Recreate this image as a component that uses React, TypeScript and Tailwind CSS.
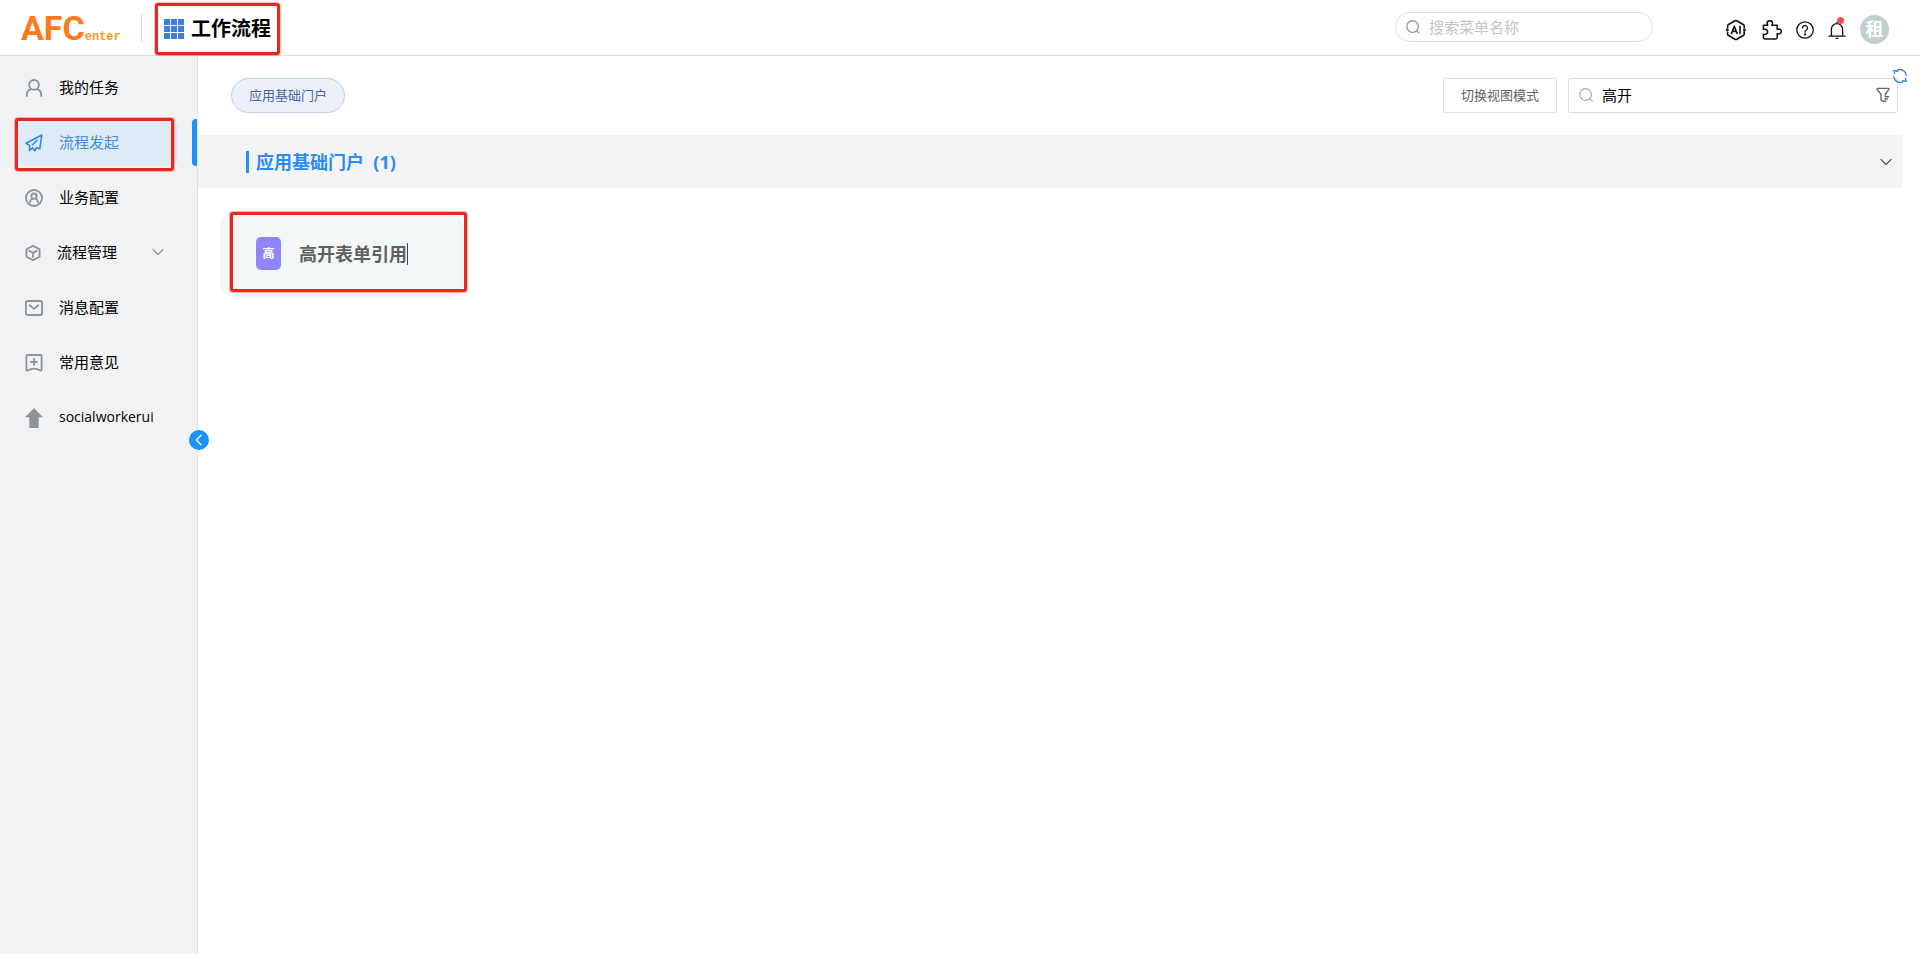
import React from "react";

type IconProps = { className?: string };

const stroke = {
  fill: "none",
  stroke: "currentColor",
  strokeLinecap: "round" as const,
  strokeLinejoin: "round" as const,
};

function SearchIcon({ className }: IconProps) {
  return (
    <svg viewBox="0 0 14 14" className={className} {...stroke} strokeWidth="1.2">
      <circle cx="6.6" cy="6.5" r="5.8" />
      <path d="M10.8 10.8 13.2 13.2" />
    </svg>
  );
}

function GridIcon({ className }: IconProps) {
  const cells = [0, 7, 14];
  return (
    <svg viewBox="0 0 20 20" className={className} fill="currentColor">
      {cells.map((y) => cells.map((x) => <rect key={`${x}-${y}`} x={x} y={y} width="6" height="6" />))}
    </svg>
  );
}

function PersonIcon({ className }: IconProps) {
  return (
    <svg viewBox="0 0 18 18" className={className} {...stroke} strokeWidth="1.9">
      <circle cx="9" cy="5.9" r="4.9" />
      <path d="M1.8 17v-1.6c0-2.6 1.6-4.3 4.1-5.2M16.2 17v-1.6c0-2.6-1.6-4.3-4.1-5.2" />
    </svg>
  );
}

function PlaneIcon({ className }: IconProps) {
  return (
    <svg viewBox="0 0 18 18" className={className} {...stroke} strokeWidth="1.6">
      <path d="M16.8 1 1 9.2l3.6 2.2v5.3l2.9-2.9 2.4 3 1.6-3.1 3.3 1.1z" />
      <path d="m7.500 10.800 4.500-4.600" />
    </svg>
  );
}

function UserCircleIcon({ className }: IconProps) {
  return (
    <svg viewBox="0 0 18 18" className={className} {...stroke} strokeWidth="1.8">
      <circle cx="9" cy="9" r="8" />
      <circle cx="9" cy="7.2" r="2.7" />
      <path d="M5.1 13.4v-.5c0-1.6.9-2.6 2.2-3.2M12.9 13.4v-.5c0-1.6-.9-2.6-2.2-3.2" />
    </svg>
  );
}

function CubeIcon({ className }: IconProps) {
  return (
    <svg viewBox="0 0 16 16" className={className} {...stroke} strokeWidth="1.8">
      <path d="M8 .9 14.6 4.2v7.6L8 15.1l-6.6-3.3V4.2z" />
      <path d="M4.2 5.8 8 7.9l3.8-2.1M8 7.9v4.2" />
    </svg>
  );
}

function MailIcon({ className }: IconProps) {
  return (
    <svg viewBox="0 0 18 18" className={className} {...stroke} strokeWidth="1.8">
      <rect x=".9" y="2" width="16.2" height="14" rx="1.8" />
      <path d="m4.7 6.3 4.3 3.6 4.3-3.6" />
    </svg>
  );
}

function BookmarkIcon({ className }: IconProps) {
  return (
    <svg viewBox="0 0 18 18" className={className} {...stroke} strokeWidth="1.8">
      <path d="M1.4 1.9c0-.5.4-.9.9-.9h13.4c.5 0 .9.4.9.9v13.9c0 .7-.5 1-1.1.7-2.4-1.3-4-1.9-6.5-1.9s-4.1.6-6.5 1.9c-.6.3-1.1 0-1.1-.7z" />
      <path d="M9 5v6M6 8h6" />
    </svg>
  );
}

function ArrowUpIcon({ className }: IconProps) {
  return (
    <svg viewBox="0 0 18 20" className={className} fill="currentColor">
      <path d="M9 0 17.9 9.200h-4.200v10a.8.8 0 0 1-.8.8H5.100a.8.8 0 0 1-.8-.8v-10H.1z" />
    </svg>
  );
}

function ChevronDownIcon({ className }: IconProps) {
  return (
    <svg viewBox="0 0 12 8" className={className} {...stroke} strokeWidth="1.1">
      <path d="m1 1.5 5 5 5-5" />
    </svg>
  );
}

function ChevronLeftIcon({ className }: IconProps) {
  return (
    <svg viewBox="0 0 8 12" className={className} {...stroke} strokeWidth="1.3">
      <path d="m6 1.2-4.6 4.8L6 10.8" />
    </svg>
  );
}

function AiIcon({ className }: IconProps) {
  return (
    <svg viewBox="1 0 22 22" className={className} {...stroke} strokeWidth="1.6">
      <path d="M2.6 9V6.8c0-.5.2-.8.6-1L10 1.7c.6-.3 1.2-.3 1.8 0l6.8 4.1c.4.2.6.5.6 1v1.9" />
      <path d="M2.6 13.2v2c0 .5.2.8.6 1l6.8 4.1c.6.3 1.2.3 1.8 0l6.8-4.1c.4-.2.6-.5.6-1v-2.4" />
      <circle cx="2.4" cy="11" r=".6" fill="currentColor" />
      <circle cx="19.4" cy="11" r=".6" fill="currentColor" />
      <path d="m6.5 14.5 2.8-7.3 2.8 7.3M7.6 12.4h3.5M15 7.4v7" />
    </svg>
  );
}

function PuzzleIcon({ className }: IconProps) {
  return (
    <svg viewBox="0 0 20 20" className={className} {...stroke} strokeWidth="1.5">
      <path d="M1.400 5.200h4.400c-.5-.7-.7-1.200-.7-1.800a2.700 2.700 0 0 1 5.400 0c0 .6-.2 1.100-.7 1.800h5.400v4.400c.6-.4 1.100-.5 1.600-.5a2.500 2.500 0 0 1 0 5c-.5 0-1-.1-1.600-.5v4c0 .9-.4 1.300-1.300 1.300H2.700c-.9 0-1.300-.4-1.300-1.300v-3.300c2.800.6 4.300-.7 4.300-2.400S4.200 8.800 1.400 9.400z" />
    </svg>
  );
}

function HelpIcon({ className }: IconProps) {
  return (
    <svg viewBox="0 0 18 18" className={className} {...stroke} strokeWidth="1.3">
      <circle cx="9" cy="9" r="8.2" />
      <path d="M6.5 7a2.5 2.5 0 1 1 4 2c-.9.6-1.5 1.1-1.5 2.1" />
      <circle cx="9" cy="13.4" r=".5" fill="currentColor" />
    </svg>
  );
}

function BellIcon({ className }: IconProps) {
  return (
    <svg viewBox="0 0 18 18" className={className} {...stroke} strokeWidth="1.3">
      <path d="M1 15.2h16M3.4 15V8.2a5.6 5.6 0 0 1 11.2 0V15M9 2.4V1.2M8.200 17.5h1.6" />
    </svg>
  );
}

function FilterIcon({ className }: IconProps) {
  return (
    <svg viewBox="0 0 14 16" className={className} {...stroke} strokeWidth="1.4">
      <path d="M7.6 14.6 5 13V7.4L1.3 2.6c-.4-.7-.2-1.2.6-1.2h10.4c.8 0 1 .5.6 1.2L9.2 7.2v1.4M9.3 9.8h3.2M8.8 12h2.6M8.2 14.2h1.6" />
    </svg>
  );
}

function RefreshIcon({ className }: IconProps) {
  return (
    <svg viewBox="0 0 14 14" className={className} {...stroke} strokeWidth="1.3">
      <path d="M4.2 1.2a6.2 6.2 0 0 1 9 5.1M9.8 12.8A6.2 6.2 0 0 1 .8 7.7M1.5 4.8.9 1.5l3.6.9M12.5 9.2l.6 3.3-3.6-.9" />
    </svg>
  );
}

function Highlight({ className }: { className: string }) {
  return (
    <span
      aria-hidden="true"
      className={`pointer-events-none absolute z-10 rounded-[3px] border-3 border-[#e8281f] shadow-[0_0_0_1px_rgba(240,60,50,0.35)] ${className}`}
    />
  );
}

type NavItem = {
  label: string;
  icon: (p: IconProps) => React.ReactElement;
  active?: boolean;
  expandable?: boolean;
  latin?: boolean;
};

const navItems: NavItem[] = [
  { label: "我的任务", icon: PersonIcon },
  { label: "流程发起", icon: PlaneIcon, active: true },
  { label: "业务配置", icon: UserCircleIcon },
  { label: "流程管理", icon: CubeIcon, expandable: true },
  { label: "消息配置", icon: MailIcon },
  { label: "常用意见", icon: BookmarkIcon },
  { label: "socialworkerui", icon: ArrowUpIcon, latin: true },
];

function Header() {
  return (
    <header className="flex h-14 shrink-0 items-center border-b border-[#dcdcdc] bg-white pl-[21px] pr-[31px]">
      <a href="#home" aria-label="AFCenter" className="flex w-[120px] items-baseline whitespace-nowrap">
        <span className="font-[Roboto,sans-serif] text-[34px] leading-none font-bold text-[#ff7a1f]">AFC</span>
        <span className="font-['Liberation_Mono',monospace] text-xs leading-none font-bold text-[#f5a01c]">enter</span>
      </a>
      <div className="h-7 w-px bg-[#dcdcdc]" />
      <div className="relative mt-0.5 ml-[22px] flex items-center gap-[7px]">
        <GridIcon className="h-5 w-5 text-[#3d7ddb]" />
        <h1 className="text-xl leading-7 font-bold text-black">工作流程</h1>
        <Highlight className="-inset-x-[9px] -inset-y-3" />
      </div>
      <label className="mr-[73px] mb-0.5 ml-auto flex h-[30px] w-[258px] items-center gap-[9px] rounded-full border border-[#dcdfe6] px-2.5">
        <SearchIcon className="h-3.5 w-3.5 shrink-0 text-[#8c8c8c]" />
        <input
          type="text"
          aria-label="搜索菜单名称"
          placeholder="搜索菜单名称"
          className="w-full min-w-0 bg-transparent text-[15px] leading-5 outline-none placeholder:text-[#c0c4cc]"
        />
      </label>
      <div className="flex items-center gap-3.5 pt-1 text-[#111]">
        <button type="button" aria-label="AI">
          <AiIcon className="h-[22px] w-[22px]" />
        </button>
        <button type="button" aria-label="插件">
          <PuzzleIcon className="h-5 w-5" />
        </button>
        <button type="button" aria-label="帮助">
          <HelpIcon className="h-[18px] w-[18px]" />
        </button>
        <button type="button" aria-label="通知" className="relative">
          <BellIcon className="h-[18px] w-[18px]" />
          <span className="absolute -top-1 right-0.5 h-[7px] w-[7px] rounded-full bg-[#ff4d4f]" />
        </button>
        <button
          type="button"
          className="flex h-[29px] w-[29px] items-center justify-center rounded-full bg-[#c0cfcf] pb-0.5 text-lg leading-none font-bold text-white"
        >
          租
        </button>
      </div>
    </header>
  );
}

function Sidebar() {
  return (
    <aside className="relative w-[198px] shrink-0 border-r border-[#dfe1e4] bg-[#f0f2f4] pt-2">
      <nav className="flex flex-col gap-2">
        {navItems.map(({ label, icon: Icon, active, expandable, latin }) => (
          <div key={label} className="relative flex justify-between pl-[19px]">
            <a
              href={`#${label}`}
              className={`flex h-[47px] w-[159px] items-center rounded-lg pb-0.5 pl-1.5 leading-5 ${
                latin ? "text-sm" : "text-[15px]"
              } ${active ? "bg-[#deeaf6] text-[#3a8ee6]" : "text-black"}`}
            >
              <Icon
                className={`mt-0.5 shrink-0 ${active ? "text-[#2f88f0]" : "text-[#8f9298]"} ${
                  expandable ? "mr-4 h-4 w-4" : latin ? "mr-4 h-5 w-[18px]" : "mr-4 h-[18px] w-[18px]"
                }`}
              />
              <span>{label}</span>
              {expandable && <ChevronDownIcon className="mr-3.5 ml-auto h-2 w-3 text-[#8f9298]" />}
            </a>
            {active && <span className="w-[5px] rounded-l bg-[#1e8fff]" />}
            {active && <Highlight className="-top-px -bottom-[5px] left-[15px] w-[159px]" />}
          </div>
        ))}
      </nav>
      <button
        type="button"
        aria-label="收起菜单"
        className="absolute top-[374px] -right-3 z-10 flex h-5 w-5 items-center justify-center rounded-full bg-[#1e8fff] text-white"
      >
        <ChevronLeftIcon className="h-3 w-2" />
      </button>
    </aside>
  );
}

function Toolbar() {
  return (
    <div className="flex h-[79px] items-center justify-between pr-[22px] pl-[33px]">
      <button
        type="button"
        className="h-[35px] rounded-full border border-[#c3d0e6] bg-[#eaeff8] px-[17px] pb-0.5 text-[13px] leading-5 text-[#4a64a5]"
      >
        应用基础门户
      </button>
      <div className="flex items-center gap-[11px]">
        <button
          type="button"
          className="h-[35px] rounded-xs border border-[#dcdfe6] bg-white px-[17px] pb-0.5 text-[13px] leading-5 text-[#606266]"
        >
          切换视图模式
        </button>
        <div className="relative flex h-[35px] w-[330px] items-center gap-[9px] rounded-xs border border-[#dcdcdc] bg-white pr-[7px] pb-0.5 pl-2.5">
          <SearchIcon className="h-3.5 w-3.5 shrink-0 text-[#a8abb2]" />
          <input
            type="text"
            aria-label="搜索流程"
            defaultValue="高开"
            className="min-w-0 flex-1 bg-transparent text-[15px] leading-5 text-black outline-none"
          />
          <button type="button" aria-label="筛选">
            <FilterIcon className="h-4 w-3.5 text-[#666]" />
          </button>
          <button type="button" aria-label="刷新" className="absolute -top-[10px] -right-2.5">
            <RefreshIcon className="h-3.5 w-3.5 text-[#3f86e0]" />
          </button>
        </div>
      </div>
    </div>
  );
}

export default function App() {
  return (
    <div className="flex min-h-screen flex-col bg-white font-['Open_Sans','Noto_Sans_CJK_SC',sans-serif]">
      <Header />
      <div className="flex flex-1">
        <Sidebar />
        <main className="min-w-0 flex-1">
          <Toolbar />
          <section>
            <div className="mr-[18px] flex h-[53px] items-center justify-between bg-[#f4f4f4] pr-2.5 pl-12">
              <h2 className="flex items-center gap-[7px] text-lg leading-[22px] font-bold text-[#2a8cf0]">
                <span className="h-[22px] w-[3px] bg-[#2a8cf0]" />
                <span className="whitespace-pre">应用基础门户  (1)</span>
              </h2>
              <button type="button" aria-label="展开或收起">
                <ChevronDownIcon className="h-2 w-3 text-[#555]" />
              </button>
            </div>
            <div className="px-[22px] pt-[23px]">
              <a
                href="#form"
                className="relative flex h-[87px] w-[243px] items-center rounded-2xl bg-[#f2f7f8] pb-0.5 pl-9"
              >
                <span className="flex h-[33px] w-[25px] items-center justify-center rounded-[5px] bg-[#8f85ff] text-xs leading-none font-bold text-white">
                  高
                </span>
                <span className="ml-[18px] border-r border-[#444] text-lg leading-[22px] font-bold text-[#606060]">
                  高开表单引用
                </span>
                <Highlight className="top-px -right-1 bottom-[6px] left-[10px]" />
              </a>
            </div>
          </section>
        </main>
      </div>
    </div>
  );
}
